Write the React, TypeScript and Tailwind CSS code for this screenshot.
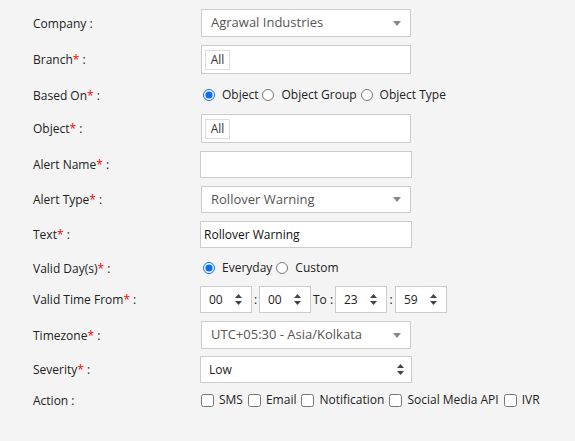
import React from "react";

const Req = () => <span className="text-[#ff0000]">*</span>;

const Label: React.FC<{ text: string; req?: boolean }> = ({ text, req }) => (
  <div className="w-[200px] shrink-0 pl-[33px] pt-px text-[12px] text-[#222]">
    {text}
    {req && <Req />}
    {" :"}
  </div>
);

const DownArrow = () => (
  <svg width="8" height="5" viewBox="0 0 8 5" className="shrink-0">
    <path d="M0 0 H8 L4 5 Z" fill="#888" />
  </svg>
);

const UpDown = () => (
  <svg width="7" height="11" viewBox="0 0 7 11" className="shrink-0">
    <path d="M3.5 0 L7 4 H0 Z" fill="#444" />
    <path d="M0 7 H7 L3.5 11 Z" fill="#444" />
  </svg>
);

const Select2: React.FC<{ value: string }> = ({ value }) => (
  <div className="ml-px flex h-full w-[210px] items-center justify-between border border-[#ccc] bg-white pl-[9px] pr-[9px] text-[13px] text-[#555]">
    <span>{value}</span>
    <DownArrow />
  </div>
);

const TagBox = () => (
  <div className="ml-px flex h-full w-[210px] items-center border border-[#ccc] bg-white pl-[3px]">
    <span className="flex h-[20px] w-[25px] items-center justify-center border border-[#ddd] bg-white text-[12px] text-[#333]">
      All
    </span>
  </div>
);

const TextBox: React.FC<{ value?: string }> = ({ value }) => (
  <div className="flex h-full w-[212px] items-center border border-[#ccc] bg-white pl-[3px] text-[12px] text-[#111]">
    {value}
  </div>
);

const Spin: React.FC<{ value: string }> = ({ value }) => (
  <div className="flex h-full w-[52px] shrink-0 items-center justify-between border border-[#ccc] bg-white pl-[8px] pr-[9px] text-[12px] text-[#222]">
    <span>{value}</span>
    <UpDown />
  </div>
);

const Radio: React.FC<{ label: string; checked?: boolean; first?: boolean }> = ({
  label,
  checked,
  first,
}) => (
  <label className={`flex items-center ${first ? "ml-[3px]" : "ml-[4px]"}`}>
    <input
      type="radio"
      readOnly
      checked={!!checked}
      className="m-0 h-[12px] w-[12px] accent-[#0a6cf5]"
    />
    <span className="ml-[7px]">{label}</span>
  </label>
);

const Check: React.FC<{ label: string; first?: boolean }> = ({ label, first }) => (
  <label className={`flex items-center ${first ? "ml-px" : "ml-[5px]"}`}>
    <input type="checkbox" readOnly className="m-0 h-[13px] w-[13px]" />
    <span className="ml-[5px]">{label}</span>
  </label>
);

export default function App() {
  return (
    <div
      className="h-[441px] w-[575px] bg-[#f4f4f4] pt-[9px] text-[#222]"
      style={{ fontFamily: '"Open Sans", "Liberation Sans", sans-serif' }}
    >
      <div className="flex h-[28px] items-center">
        <Label text="Company" />
        <Select2 value="Agrawal Industries" />
      </div>
      <div className="mt-[8px] flex h-[29px] items-center">
        <Label text="Branch" req />
        <TagBox />
      </div>
      <div className="mt-[11px] flex h-[20px] items-center">
        <Label text="Based On" req />
        <div className="flex items-center text-[12px] text-[#222]">
          <Radio label="Object" checked first />
          <Radio label="Object Group" />
          <Radio label="Object Type" />
        </div>
      </div>
      <div className="mt-[9px] flex h-[29px] items-center">
        <Label text="Object" req />
        <TagBox />
      </div>
      <div className="mt-[8px] flex h-[27px] items-center">
        <Label text="Alert Name" req />
        <TextBox />
      </div>
      <div className="mt-[8px] flex h-[27px] items-center">
        <Label text="Alert Type" req />
        <Select2 value="Rollover Warning" />
      </div>
      <div className="mt-[8px] flex h-[27px] items-center">
        <Label text="Text" req />
        <TextBox value="Rollover Warning" />
      </div>
      <div className="mt-[10px] flex h-[20px] items-center">
        <Label text="Valid Day(s)" req />
        <div className="flex items-center text-[12px] text-[#222]">
          <Radio label="Everyday" checked first />
          <Radio label="Custom" />
        </div>
      </div>
      <div className="mt-[8px] flex h-[27px] items-center">
        <Label text="Valid Time From" req />
        <div className="flex h-full items-center whitespace-nowrap text-[12px] text-[#222]">
          <Spin value="00" />
          <span className="w-[7px] text-center">:</span>
          <Spin value="00" />
          <span className="w-[24px] shrink-0 pl-[2px]">To :</span>
          <Spin value="23" />
          <span className="w-[8px] text-center">:</span>
          <Spin value="59" />
        </div>
      </div>
      <div className="mt-[8px] flex h-[28px] items-center">
        <Label text="Timezone" req />
        <Select2 value="UTC+05:30 - Asia/Kolkata" />
      </div>
      <div className="mt-[7px] flex h-[27px] items-center">
        <Label text="Severity" req />
        <div className="flex h-full w-[212px] items-center justify-between border border-[#ccc] bg-white pl-[8px] pr-[7px] text-[12px] text-[#222]">
          <span>Low</span>
          <UpDown />
        </div>
      </div>
      <div className="mt-[7px] flex h-[20px] items-center">
        <Label text="Action" />
        <div className="flex items-center text-[12px] text-[#222]">
          <Check label="SMS" first />
          <Check label="Email" />
          <Check label="Notification" />
          <Check label="Social Media API" />
          <Check label="IVR" />
        </div>
      </div>
    </div>
  );
}
